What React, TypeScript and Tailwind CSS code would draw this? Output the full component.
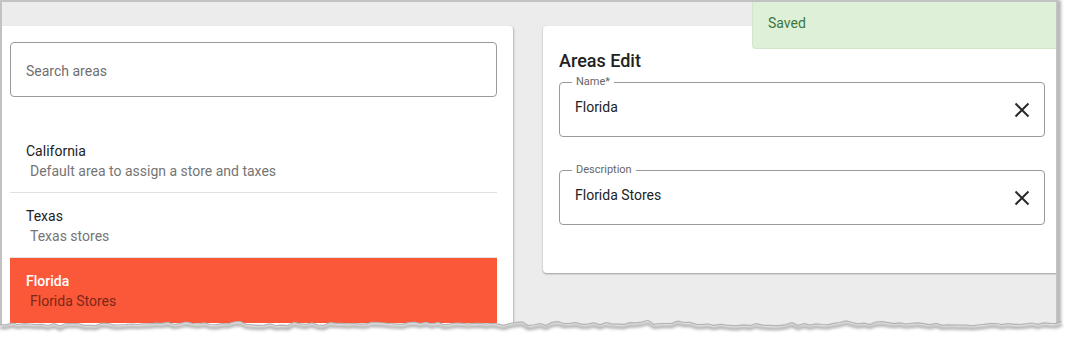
import React from "react";

function tornPoints(): [number, number][] {
  let seed = 98765;
  const rnd = () => {
    seed = (seed * 1103515245 + 12345) % 2147483648;
    return seed / 2147483648;
  };
  const pts: [number, number][] = [];
  for (let x = 0; x <= 1062; x += 6) {
    const base = 10 + Math.sin(x / 37) * 0.8;
    const y = base + (rnd() - 0.5) * 2.6 + (rnd() > 0.88 ? -1.8 : 0);
    pts.push([x, y]);
  }
  return pts;
}

function TornEdge() {
  const pts = tornPoints();
  const line = pts.map((p) => `${p[0]},${p[1].toFixed(1)}`).join(" ");
  const fillPoly = `${line} 1067,6 1067,30 0,30`;
  const shadowLine = pts.map((p) => `${p[0]},${(p[1] + 3).toFixed(1)}`).join(" ");
  return (
    <svg
      className="absolute left-0 top-[314px]"
      width="1067"
      height="29"
      viewBox="0 0 1067 29"
    >
      <defs>
        <filter id="blur" x="-5%" y="-100%" width="110%" height="300%">
          <feGaussianBlur stdDeviation="1.6" />
        </filter>
      </defs>
      <polygon points={fillPoly} fill="#ffffff" />
      <polyline
        points={shadowLine}
        fill="none"
        stroke="rgba(0,0,0,0.35)"
        strokeWidth="3"
        filter="url(#blur)"
      />
      <polyline points={line} fill="none" stroke="#b4b4b4" strokeWidth="1.2" />
    </svg>
  );
}

function ClearIcon() {
  return (
    <svg width="24" height="24" viewBox="0 0 24 24" className="shrink-0">
      <path d="M5.5 5.5 18.5 18.5 M18.5 5.5 5.5 18.5" stroke="#2b2b2b" strokeWidth="2" fill="none" />
    </svg>
  );
}

function Field({ label, value }: { label: string; value: string }) {
  return (
    <div className="relative h-[55px] w-[486px] rounded-[4px] border border-[#9a9a9a] bg-white flex items-start pl-[15px] pr-[10px]">
      <span className="absolute left-[12px] top-[-8px] bg-white px-[4px] text-[11px] leading-[14px] text-[#666666]">
        {label}
      </span>
      <span className="flex-1 pt-[14px] text-[14px] leading-[20px] text-[#222222]">{value}</span>
      <div className="pt-[15px]">
        <ClearIcon />
      </div>
    </div>
  );
}

const items = [
  { title: "California", desc: "Default area to assign a store and taxes", active: false },
  { title: "Texas", desc: "Texas stores", active: false },
  { title: "Florida", desc: "Florida Stores", active: true },
];

export default function App() {
  return (
    <div
      className="relative w-[1067px] h-[343px] bg-white overflow-hidden"
      style={{ fontFamily: "Roboto, 'Liberation Sans', sans-serif" }}
    >
      <div className="relative w-[1058px] h-[336px] border-t-2 border-l-2 border-r-2 border-[#c2c2c2] bg-[#ebeceb] overflow-hidden shadow-[3px_0_3px_rgba(0,0,0,0.3)]">
        <div className="flex items-start pt-[24px] gap-[30px]">
          {/* Left card */}
          <div className="w-[511px] h-[320px] shrink-0 bg-white rounded-tr-[4px] shadow-[1px_1px_2px_rgba(0,0,0,0.25)] px-[8px] pt-[16px]">
            <div className="h-[55px] w-[487px] rounded-[4px] border border-[#9a9a9a] flex items-center pl-[15px] pt-[3px] text-[14px] text-[#6f6f6f]">
              Search areas
            </div>
            <div className="mt-[31px] w-[487px]">
              {items.map((it) => (
                <div
                  key={it.title}
                  className={
                    it.active
                      ? "h-[65px] bg-[#fb5839] pl-[16px] pt-[13px]"
                      : "h-[65px] border-b border-[#e0e0e0] pl-[16px] pt-[13px]"
                  }
                >
                  <div
                    className={
                      it.active
                        ? "text-[14px] leading-[20px] font-medium text-white"
                        : "text-[14px] leading-[20px] text-[#222222]"
                    }
                  >
                    {it.title}
                  </div>
                  <div
                    className={
                      it.active
                        ? "pl-[4px] text-[14px] leading-[20px] text-[#7a2817]"
                        : "pl-[4px] text-[14px] leading-[20px] text-[#757575]"
                    }
                  >
                    {it.desc}
                  </div>
                </div>
              ))}
            </div>
          </div>
          {/* Right card */}
          <div className="w-[520px] h-[247px] shrink-0 bg-white rounded-[4px] shadow-[0_1px_2px_rgba(0,0,0,0.35)] px-[16px] pt-[23px]">
            <div className="text-[18px] leading-[24px] font-medium text-[#222222]">Areas Edit</div>
            <div className="mt-[9px] flex flex-col gap-[33px]">
              <Field label="Name*" value="Florida" />
              <Field label="Description" value="Florida Stores" />
            </div>
          </div>
        </div>
        {/* Toast */}
        <div className="absolute top-0 right-0 w-[304px] h-[47px] bg-[#dff0d8] border-l border-b border-[#d0e6c8] rounded-bl-[4px] pl-[15px] pt-[11px] text-[14px] leading-[20px] text-[#3c763d]">
          Saved
        </div>
      </div>
      <TornEdge />
    </div>
  );
}
